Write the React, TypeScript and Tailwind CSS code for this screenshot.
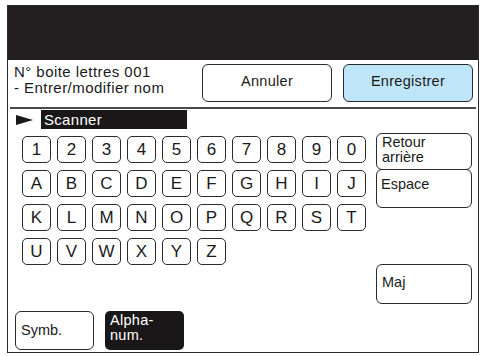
import React from "react";

const rows = [
  ["1", "2", "3", "4", "5", "6", "7", "8", "9", "0"],
  ["A", "B", "C", "D", "E", "F", "G", "H", "I", "J"],
  ["K", "L", "M", "N", "O", "P", "Q", "R", "S", "T"],
  ["U", "V", "W", "X", "Y", "Z"],
];

function Key({ label }: { label: string }) {
  return (
    <div className="w-[29px] h-[27px] border border-[#2b2b2b] rounded-[5px] bg-white flex items-center justify-center text-[17px] leading-none text-[#1a1a1a]">
      {label}
    </div>
  );
}

export default function App() {
  return (
    <div
      className="w-[482px] h-[356px] bg-white pt-[5px] pl-[7px] text-[#1a1a1a]"
      style={{ fontFamily: '"Liberation Sans", Arial, sans-serif' }}
    >
      <div className="w-[472px] h-[348px] border border-[#2b2b2b] flex flex-col">
        <div className="h-[54px] bg-[#231f20] shrink-0" />

        {/* header */}
        <div className="h-[47px] flex items-start pt-[4px] shrink-0">
          <div className="w-[194px] pl-[6px] text-[15px] leading-[16px] tracking-[0.45px]">
            <div>N° boite lettres 001</div>
            <div>- Entrer/modifier nom</div>
          </div>
          <button className="w-[130px] h-[38px] border border-[#2b2b2b] rounded-[6px] bg-white text-[14.5px] tracking-[0.3px] pb-[3px]">
            Annuler
          </button>
          <button className="ml-[11px] w-[130px] h-[38px] border border-[#2b2b2b] rounded-[6px] bg-[#bfe6f8] text-[14.5px] tracking-[0.3px] pb-[3px]">
            Enregistrer
          </button>
        </div>
        <div className="mx-[2px] h-[2px] bg-[#4a4a4a] shrink-0" />

        {/* scanner */}
        <div className="flex items-center h-[21px] shrink-0">
          <svg width="17" height="10" viewBox="0 0 17 10" className="ml-[8px]">
            <polygon points="0,0 17,5 0,10" fill="#1a1a1a" />
          </svg>
          <div className="ml-[8px] w-[146px] h-[19px] bg-[#1a1718] text-white text-[15px] leading-[19px] pl-[3px] tracking-[0.3px]">
            Scanner
          </div>
        </div>

        {/* keyboard */}
        <div className="flex mt-[3px]">
          <div className="pl-[14px] pt-[3px] flex flex-col gap-[7px]">
            {rows.map((r, i) => (
              <div key={i} className="flex gap-[6px]">
                {r.map((k) => (
                  <Key key={k} label={k} />
                ))}
              </div>
            ))}
          </div>
          <div className="ml-[10px] w-[96px] flex flex-col">
            <div className="h-[37px] border border-[#2b2b2b] rounded-[6px] pl-[5px] pt-[1px] text-[14.5px] leading-[15px]">
              <div>Retour</div>
              <div>arrière</div>
            </div>
            <div className="h-[39px] -mt-px border border-[#2b2b2b] rounded-[6px] pl-[4px] pt-[7px] text-[14.5px] leading-[15px]">
              Espace
            </div>
            <div className="mt-[56px] h-[40px] border border-[#2b2b2b] rounded-[6px] pl-[5px] flex items-center text-[14.5px] pb-[2px]">
              Maj
            </div>
          </div>
        </div>

        {/* bottom */}
        <div className="mt-auto mb-[2px] flex gap-[11px] pl-[7px]">
          <div className="w-[79px] h-[39px] border border-[#2b2b2b] rounded-[6px] pl-[5px] flex items-center text-[14.5px]">
            Symb.
          </div>
          <div className="w-[79px] h-[39px] rounded-[5px] bg-[#1a1718] text-white pl-[5px] pt-[2px] text-[14.5px] leading-[15px] tracking-[0.3px]">
            <div>Alpha-</div>
            <div>num.</div>
          </div>
        </div>
      </div>
    </div>
  );
}
